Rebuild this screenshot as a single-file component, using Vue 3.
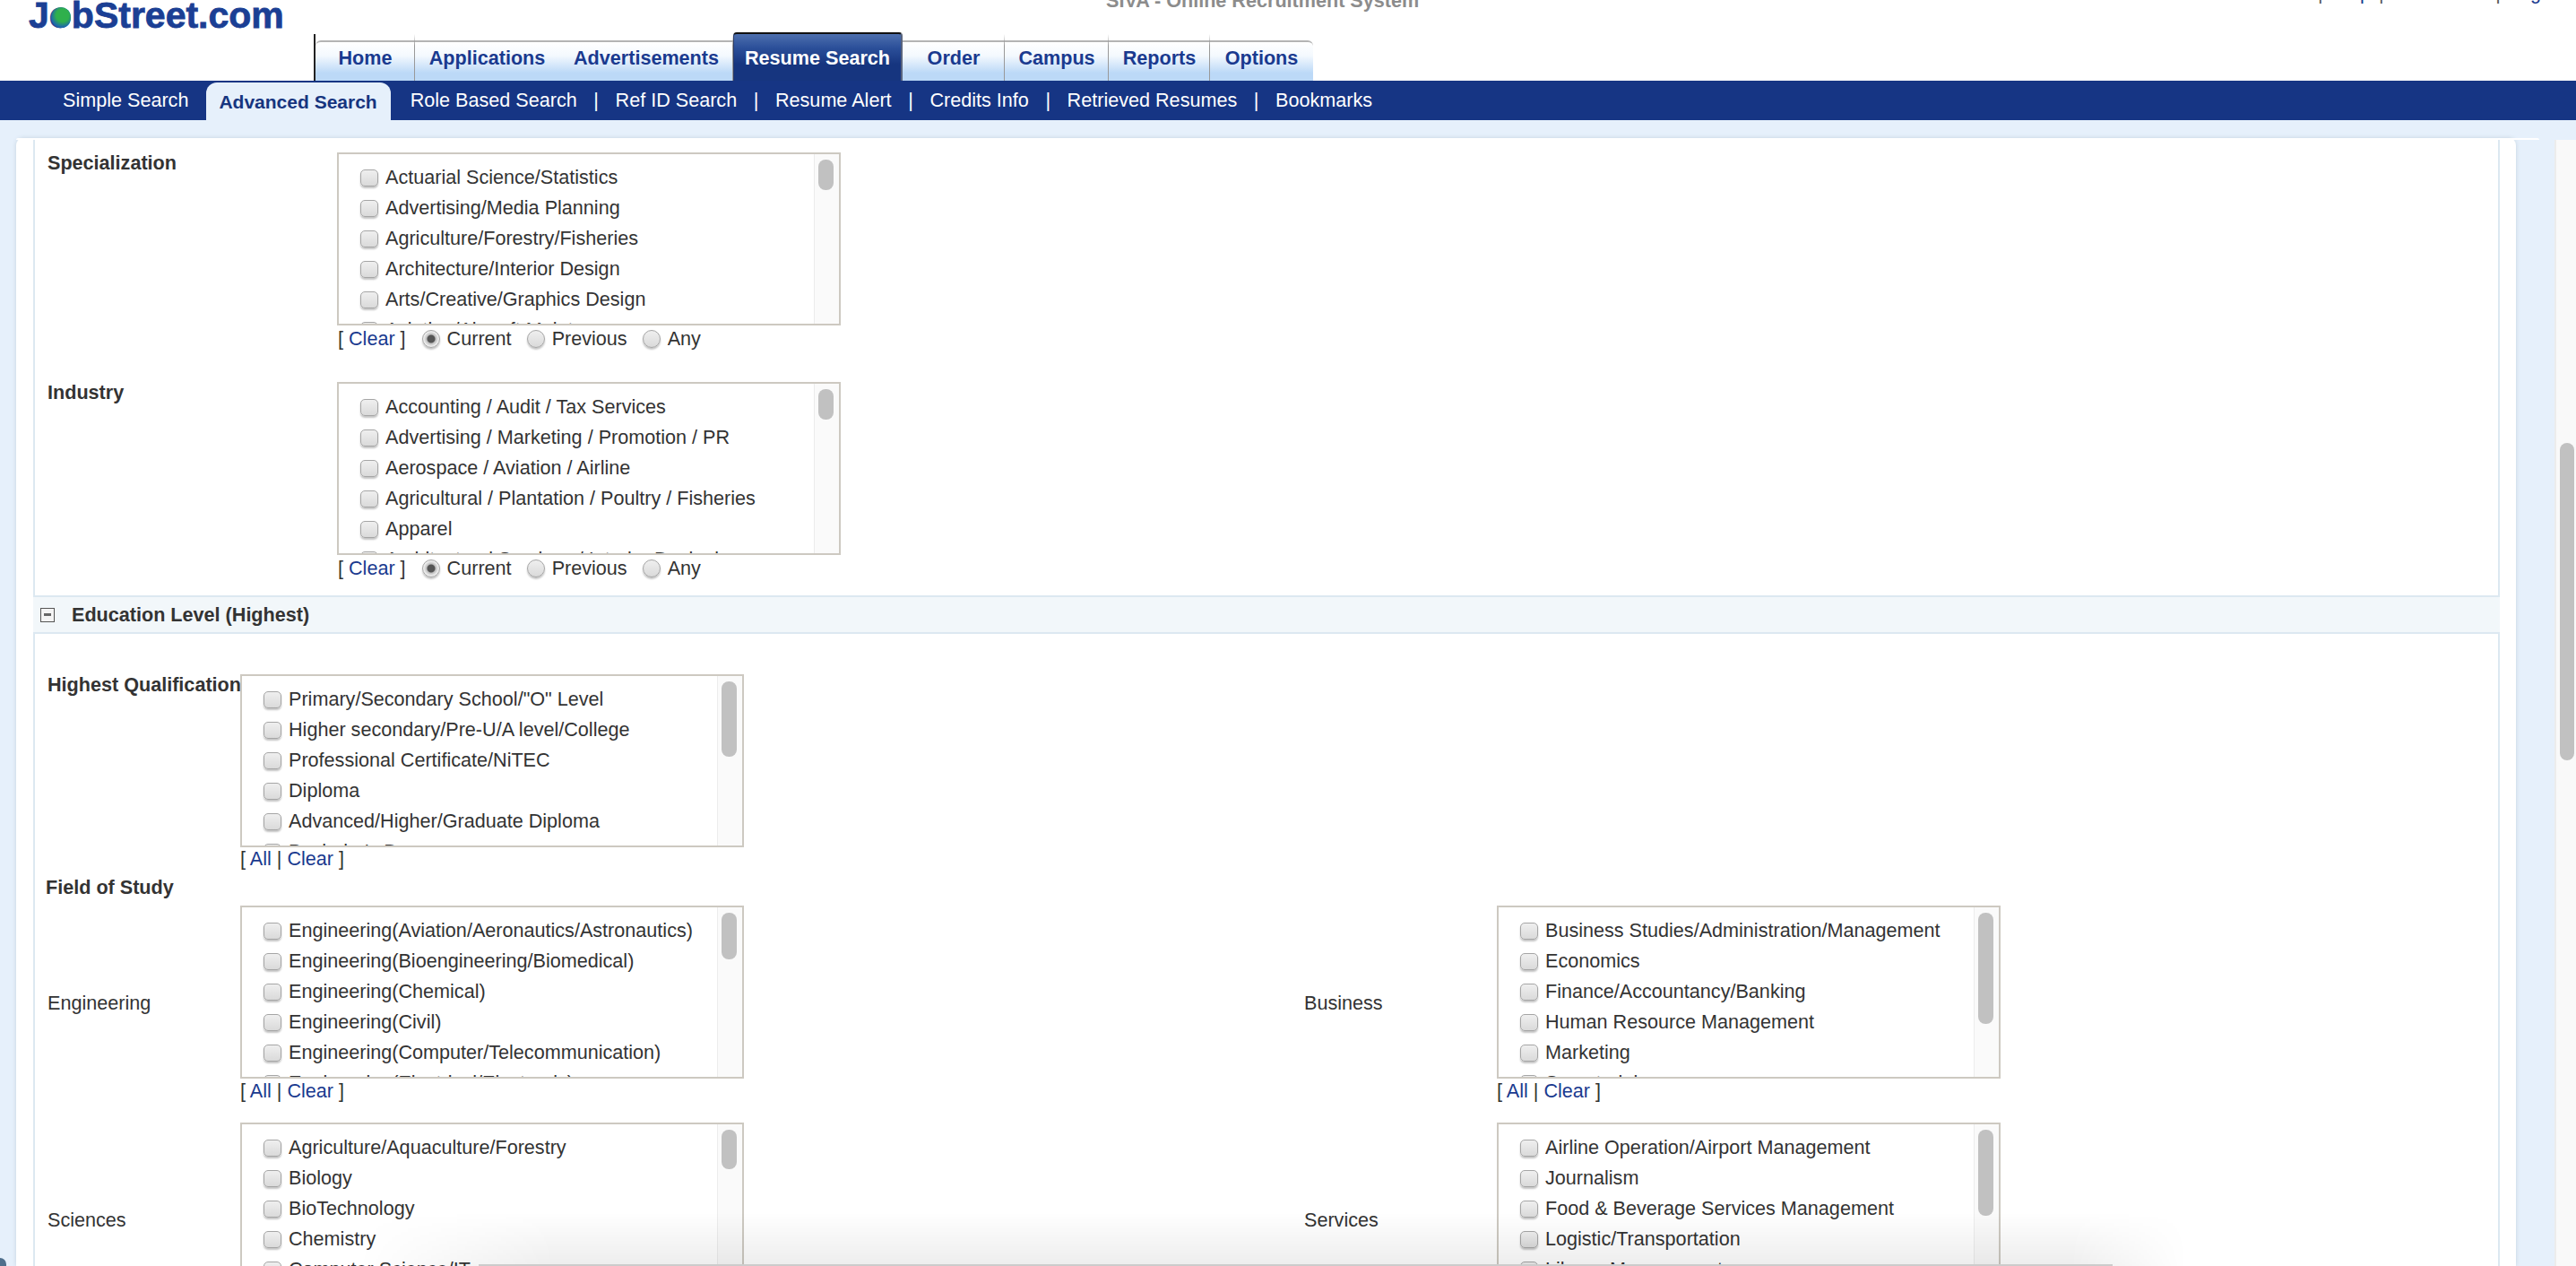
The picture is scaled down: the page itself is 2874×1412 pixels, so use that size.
<template>
  <div class="page">
    <div class="top">
      <div class="logo">J<span class="globe">o</span>bStreet.com</div>
      <div class="title">SIVA - Online Recruitment System</div>
      <div class="links">
        <span>Jobstreet Home</span><i>|</i>
        <a>Help</a><i>|</i>
        <span>Contact Us</span><i>|</i>
        <a>Logout</a>
      </div>
    </div>

    <div class="tabs">
      <div
        v-for="t in tabs"
        :key="t.name"
        class="tab"
        :class="{ active: t.name === 'Resume Search', first: t.name === 'Home', plain: t.name === 'Applications' }"
        :style="{ width: t.w + 'px' }"
      >{{ t.name }}</div>
    </div>

    <div class="subnav">
      <span class="sub">Simple Search</span>
      <span class="sub current">Advanced Search</span>
      <template v-for="(s, i) in subs" :key="s">
        <span v-if="i > 0" class="pipe">|</span>
        <span class="sub">{{ s }}</span>
      </template>
    </div>

    <div class="main">
      <div class="panel">
        <div class="inner">
          <div class="upper">
            <div v-for="f in upper" :key="f.label" class="field-top">
              <div class="label-wide"><b>{{ f.label }}</b></div>
              <div>
                <div class="listbox">
                  <div class="items">
                    <label v-for="o in f.items" :key="o" class="item"><input type="checkbox"><span>{{ o }}</span></label>
                  </div>
                  <div class="track"><div class="thumb" :style="{ height: f.thumb + 'px' }"></div></div>
                </div>
                <div class="under-radio">
                  <span>[ <a>Clear</a> ]</span>
                  <label class="radio first-radio"><input type="radio" :name="f.label" checked><span>Current</span></label>
                  <label class="radio"><input type="radio" :name="f.label"><span>Previous</span></label>
                  <label class="radio"><input type="radio" :name="f.label"><span>Any</span></label>
                </div>
              </div>
            </div>
          </div>

          <div class="section-bar">
            <span class="minus"></span>
            <b>Education Level (Highest)</b>
          </div>

          <div class="lower">
            <div class="field-qual">
              <div class="label-narrow nowrap"><b>Highest Qualification</b></div>
              <div>
                <div class="listbox">
                  <div class="items">
                    <label v-for="o in qualification" :key="o" class="item"><input type="checkbox"><span>{{ o }}</span></label>
                  </div>
                  <div class="track"><div class="thumb" :style="{ height: '84px' }"></div></div>
                </div>
                <div class="under">[ <a>All</a> | <a>Clear</a> ]</div>
              </div>
            </div>

            <div class="study-title"><b>Field of Study</b></div>

            <div class="study">
              <div v-for="f in study" :key="f.label" class="study-cell">
                <div class="label-narrow study-label">{{ f.label }}</div>
                <div>
                  <div class="listbox">
                    <div class="items">
                      <label v-for="o in f.items" :key="o" class="item"><input type="checkbox"><span>{{ o }}</span></label>
                    </div>
                    <div class="track"><div class="thumb" :style="{ height: f.thumb + 'px' }"></div></div>
                  </div>
                  <div class="under">[ <a>All</a> | <a>Clear</a> ]</div>
                </div>
              </div>
            </div>
          </div>
        </div>
      </div>
      <div class="scrollbar"><div class="scroll-thumb"></div></div>
    </div>

    <!-- window shadow of the next window, lies over the page -->
    <div class="fade"></div>
    <div class="fade-line"></div>
    <div class="corner"></div>
  </div>
</template>

<script setup>
const tabs = [
  { name: 'Home', w: 111 },
  { name: 'Applications', w: 161 },
  { name: 'Advertisements', w: 194 },
  { name: 'Resume Search', w: 189 },
  { name: 'Order', w: 114 },
  { name: 'Campus', w: 116 },
  { name: 'Reports', w: 113 },
  { name: 'Options', w: 115 }
]

const subs = ['Role Based Search', 'Ref ID Search', 'Resume Alert', 'Credits Info', 'Retrieved Resumes', 'Bookmarks']

const upper = [
  {
    label: 'Specialization',
    thumb: 34,
    items: [
      'Actuarial Science/Statistics',
      'Advertising/Media Planning',
      'Agriculture/Forestry/Fisheries',
      'Architecture/Interior Design',
      'Arts/Creative/Graphics Design',
      'Aviation/Aircraft Maintenance'
    ]
  },
  {
    label: 'Industry',
    thumb: 34,
    items: [
      'Accounting / Audit / Tax Services',
      'Advertising / Marketing / Promotion / PR',
      'Aerospace / Aviation / Airline',
      'Agricultural / Plantation / Poultry / Fisheries',
      'Apparel',
      'Architectural Services / Interior Designing'
    ]
  }
]

const qualification = [
  'Primary/Secondary School/"O" Level',
  'Higher secondary/Pre-U/A level/College',
  'Professional Certificate/NiTEC',
  'Diploma',
  'Advanced/Higher/Graduate Diploma',
  "Bachelor's Degree"
]

const study = [
  {
    label: 'Engineering',
    thumb: 52,
    items: [
      'Engineering(Aviation/Aeronautics/Astronautics)',
      'Engineering(Bioengineering/Biomedical)',
      'Engineering(Chemical)',
      'Engineering(Civil)',
      'Engineering(Computer/Telecommunication)',
      'Engineering(Electrical/Electronic)'
    ]
  },
  {
    label: 'Business',
    thumb: 124,
    items: [
      'Business Studies/Administration/Management',
      'Economics',
      'Finance/Accountancy/Banking',
      'Human Resource Management',
      'Marketing',
      'Secretarial'
    ]
  },
  {
    label: 'Sciences',
    thumb: 44,
    items: [
      'Agriculture/Aquaculture/Forestry',
      'Biology',
      'BioTechnology',
      'Chemistry',
      'Computer Science/IT'
    ]
  },
  {
    label: 'Services',
    thumb: 96,
    items: [
      'Airline Operation/Airport Management',
      'Journalism',
      'Food & Beverage Services Management',
      'Logistic/Transportation',
      'Library Management'
    ]
  }
]
</script>

<style>
html, body {
  margin: 0;
  overflow: hidden;
  background: #fff;
}
</style>

<style scoped>
.page {
  position: relative;
  width: 2874px;
  height: 1412px;
  overflow: hidden;
  display: flex;
  flex-direction: column;
  font-family: "Liberation Sans", Arial, sans-serif;
  font-size: 21.6px;
  line-height: 24px;
  color: #333;
  background: #fff;
}

a {
  color: #1a3a8f;
}

/* top strip, cut off by the top of the window */
.top {
  height: 36px;
  flex: none;
  display: flex;
}

.logo {
  width: 1202px;
  flex: none;
  margin-top: -3px;
  padding-left: 32px;
  font-size: 41px;
  line-height: 41px;
  font-weight: bold;
  color: #1b3f94;
  -webkit-text-stroke: 0.8px #1b3f94;
}

.globe {
  position: relative;
}

.globe::after {
  content: "";
  position: absolute;
  left: 2px;
  top: 14px;
  width: 22px;
  height: 23px;
  border-radius: 50%;
  background: radial-gradient(circle at 58% 40%, #2fb04c 0 38%, #1f6aa8 68%, #1b3f94 100%);
}

.title {
  margin-top: -11px;
  font-weight: bold;
  color: #8c8c8c;
}

.links {
  margin-left: auto;
  margin-top: -20px;
  margin-right: 9px;
  display: flex;
  color: #dfe3f5;
}

.links i {
  font-style: normal;
  margin: 0 9px;
  color: #555;
}

/* main tabs */
.tabs {
  height: 54px;
  flex: none;
  display: flex;
  margin-left: 352px;
  position: relative;
}

.tabs::before {
  content: "";
  position: absolute;
  left: -2px;
  top: 2px;
  bottom: 0;
  width: 2px;
  background: #222;
}

.tab {
  position: relative;
  box-sizing: border-box;
  height: 45px;
  margin-top: 9px;
  padding-top: 6px;
  text-align: center;
  font-weight: bold;
  color: #1a3a8f;
  border-top: 2px solid #b4b4b4;
  background: linear-gradient(#ffffff 0, #f4f9fe 35%, #bcd9f7 80%, #bcd9f7 100%);
}

.tab::after {
  content: "";
  position: absolute;
  right: 0;
  top: -9px;
  bottom: 0;
  width: 1px;
  background: linear-gradient(rgba(150, 150, 150, 0), #999 25%);
}

.tab.plain::after {
  display: none;
}

.tab.first {
  border-top-left-radius: 6px;
}

.tab:last-child {
  border-top-right-radius: 6px;
}

.tab:last-child::after {
  display: none;
}

.tab.active {
  height: 54px;
  margin-top: 0;
  padding-top: 15px;
  color: #fff;
  border-top: 2px solid #111;
  border-left: 1px solid #2a3a66;
  border-right: 2px solid #59647e;
  border-radius: 4px 4px 0 0;
  background: linear-gradient(#4d6fae 0, #2b4f99 30%, #16357f 65%, #16357f 100%);
}

.tab.active::after {
  display: none;
}

/* second level nav */
.subnav {
  height: 44px;
  flex: none;
  display: flex;
  align-items: center;
  padding-left: 70px;
  background: #163584;
  color: #fff;
}

.sub {
  flex: none;
}

.sub.current {
  align-self: flex-end;
  height: 42px;
  box-sizing: border-box;
  margin: 0 22px 0 20px;
  padding: 10px 15px 0 14px;
  border-radius: 12px 12px 0 0;
  background: #e6f0fb;
  color: #16357f;
  font-size: 21px;
  font-weight: bold;
}

.pipe {
  margin: 0 18.6px;
}

/* page body */
.main {
  flex: 1;
  min-height: 0;
  display: flex;
  background: #e6f0fb;
}

.panel {
  position: relative;
  width: 2789px;
  flex: none;
  margin: 20px 0 0 18px;
  padding: 2px 18px 0 19px;
  box-sizing: border-box;
  background: #fff;
  border-radius: 8px 8px 0 0;
  box-shadow: 0 0 5px #c4d2df;
}

/* top edge of the panel runs on past the scrolling area */
.panel::before {
  content: "";
  position: absolute;
  left: 0;
  right: -26px;
  top: 0;
  height: 2px;
  border-radius: 2px 2px 0 0;
  background: #fff;
}

.inner {
  border-left: 2px solid #dce8f1;
  border-right: 2px solid #dce8f1;
  min-height: 100%;
}

.scrollbar {
  width: 24px;
  box-sizing: border-box;
  flex: none;
  margin: 22px 0 0 43px;
  padding: 338px 2px 0 4px;
  background: #f9f9f9;
  border-left: 2px solid #ececec;
}

.scroll-thumb {
  height: 354px;
  border-radius: 8px;
  background: #c1c1c1;
}

.upper {
  padding: 14px 0 15px 14px;
}

.field-top {
  display: flex;
}

.field-top + .field-top {
  margin-top: 33px;
}

.label-wide {
  width: 323px;
  flex: none;
}

.label-narrow {
  width: 215px;
  flex: none;
}

.nowrap {
  white-space: nowrap;
}

.study-label {
  padding-bottom: 3px;
}

/* scrolling check list */
.listbox {
  width: 562px;
  height: 193px;
  box-sizing: border-box;
  display: flex;
  border: 2px solid #cdc9c1;
  overflow: hidden;
  background: #fff;
}

.items {
  flex: 1;
  padding-top: 9px;
}

.item {
  display: flex;
  align-items: center;
  gap: 8px;
  height: 34px;
  padding-left: 24px;
  white-space: nowrap;
}

.item input,
.radio input {
  appearance: none;
  -webkit-appearance: none;
  margin: 0;
  flex: none;
  width: 20px;
  height: 19px;
  box-sizing: border-box;
  border: 1px solid #a5a5a5;
  border-radius: 5px;
  background: linear-gradient(#efefef, #dadada);
  box-shadow: 0 2px 2px #c4c4c4;
}

.radio input {
  border-radius: 50%;
  height: 20px;
}

.radio input:checked {
  background: radial-gradient(circle, #555 0 4px, #bdbdbd 5px, #ececec 8px);
}

.track {
  width: 28px;
  flex: none;
  box-sizing: border-box;
  padding: 6px 6px 0 4px;
  background: #fafafa;
  border-left: 1px solid #ececec;
}

.thumb {
  border-radius: 8px;
  background: #c1c1c1;
}

.under-radio {
  height: 30px;
  display: flex;
  align-items: center;
  padding-left: 1px;
}

.radio {
  display: flex;
  align-items: center;
  gap: 8px;
  margin-left: 17px;
}

.first-radio {
  margin-left: 18px;
}

.under {
  height: 28px;
  line-height: 28px;
}

/* section header */
.section-bar {
  box-sizing: border-box;
  height: 43px;
  margin: 0 -2px;
  display: flex;
  align-items: center;
  padding-left: 8px;
  gap: 19px;
  background: #f2f7fa;
  border-top: 2px solid #dce8f1;
  border-bottom: 2px solid #dce8f1;
}

.minus {
  position: relative;
  width: 16px;
  height: 16px;
  box-sizing: border-box;
  flex: none;
  border: 1px solid #555;
  background: #f4f4f4;
}

.minus::after {
  content: "";
  position: absolute;
  left: 3px;
  right: 3px;
  top: 5px;
  height: 3px;
  background: #666;
}

.lower {
  padding: 45px 0 0 14px;
}

.field-qual {
  display: flex;
}

.field-qual .under {
  height: 26px;
  line-height: 26px;
}

.study-title {
  margin: 7px 0 8px -2px;
}

.study {
  display: grid;
  grid-template-columns: 1402px 1fr;
  row-gap: 21px;
}

.study-cell {
  display: flex;
  align-items: center;
}

/* overlays at the bottom edge of the shot */
.fade {
  position: absolute;
  left: 400px;
  width: 2040px;
  top: 1352px;
  bottom: 0;
  background: linear-gradient(rgba(0, 0, 0, 0), rgba(0, 0, 0, 0.07));
  -webkit-mask-image: linear-gradient(to right, transparent, #000 220px, #000 calc(100% - 130px), transparent);
  mask-image: linear-gradient(to right, transparent, #000 220px, #000 calc(100% - 130px), transparent);
}

.fade-line {
  position: absolute;
  left: 534px;
  width: 1823px;
  bottom: 0;
  height: 2px;
  background: #cccccc;
}

.corner {
  position: absolute;
  left: 0;
  bottom: 0;
  width: 7px;
  height: 9px;
  border-top-right-radius: 7px;
  background: #4f6f8c;
}
</style>
